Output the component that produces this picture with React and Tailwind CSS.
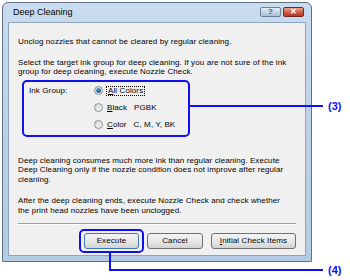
import React from "react";

function Radio({ checked }) {
  return (
    <span className="relative inline-flex h-[9px] w-[9px] shrink-0 items-center justify-center rounded-full border border-[#8e8f8f] bg-gradient-to-br from-[#d8d8d8] to-[#f8f8f8]">
      {checked && <span className="h-[5px] w-[5px] rounded-full bg-gradient-to-br from-[#5fa6d9] to-[#0b4f8a]" />}
    </span>
  );
}

function Btn({ children, def, className }) {
  return (
    <div
      className={
        "flex h-[16px] items-center justify-center rounded-[3px] border bg-gradient-to-b from-[#f4f4f4] via-[#e8e8e8] to-[#d2d2d2] text-[8px] text-black " +
        (def ? "border-[#3d7bad]" : "border-[#707070]") +
        " " +
        className
      }
    >
      {children}
    </div>
  );
}

export default function App() {
  return (
    <div
      className="relative h-[280px] w-[350px] overflow-hidden bg-white text-black"
      style={{ fontFamily: '"Liberation Sans", Arial, sans-serif' }}
    >
      {/* window */}
      <div className="ml-[2px] mt-[2px] flex h-[260px] w-[310px] flex-col rounded-t-[6px] border border-[#5f7187] bg-gradient-to-b from-[#c9dcef] via-[#bcd1e8] to-[#b3cbe4] px-[5px] pb-[5px]">
        {/* title bar */}
        <div className="flex h-[19px] shrink-0 items-center justify-between pl-[5px] pr-[2px]">
          <span className="text-[9px] leading-none text-black">Deep Cleaning</span>
          <div className="flex -mt-[3px] gap-[2px] self-start pt-[7px]">
            <div className="flex h-[10px] w-[21px] items-center justify-center rounded-[2px] border border-[#6b7f96] bg-gradient-to-b from-[#e3edf7] to-[#a9c0da] text-[8px] font-bold leading-none text-[#3b4f66]">
              ?
            </div>
            <div className="flex h-[10px] w-[21px] items-center justify-center rounded-[2px] border border-[#6e2a22] bg-gradient-to-b from-[#e8a493] via-[#d2604a] to-[#b8321e] text-[8px] font-bold leading-none text-white">
              ✕
            </div>
          </div>
        </div>

        {/* client area */}
        <div className="flex flex-1 flex-col border border-[#8ea4bd] bg-[#f0f0f0] px-[9px] text-[8px] leading-[9.5px] tracking-[0.1px]">
          <p className="mt-[14px]">Unclog nozzles that cannot be cleared by regular cleaning.</p>
          <p className="mt-[11px]">
            Select the target ink group for deep cleaning. If you are not sure of the ink
            <br />
            group for deep cleaning, execute Nozzle Check.
          </p>

          {/* ink group */}
          <div className="ml-[4px] mt-[3px] flex h-[57px] w-[168px] rounded-[5px] border-2 border-[#1010f0] pl-[5px] pt-[4px]">
            <div className="w-[65px]">Ink Group:</div>
            <div className="flex flex-col gap-[7.5px]">
              <div className="flex items-center gap-[3px]">
                <Radio checked />
                <span className="border border-dotted border-black px-[1px] leading-[8px]">
                  <u>A</u>ll Colors
                </span>
              </div>
              <div className="flex items-center gap-[4px]">
                <Radio />
                <span>
                  <u>B</u>lack&nbsp;&nbsp;&nbsp;PGBK
                </span>
              </div>
              <div className="flex items-center gap-[4px]">
                <Radio />
                <span>
                  <u>C</u>olor&nbsp;&nbsp;&nbsp;C, M, Y, BK
                </span>
              </div>
            </div>
          </div>

          <p className="mt-[19px]">
            Deep cleaning consumes much more ink than regular cleaning. Execute
            <br />
            Deep Cleaning only if the nozzle condition does not improve after regular
            <br />
            cleaning.
          </p>
          <p className="mt-[12px]">
            After the deep cleaning ends, execute Nozzle Check and check whether
            <br />
            the print head nozzles have been unclogged.
          </p>

          <div className="mt-[8px] h-px bg-[#a0a0a0] shadow-[0_1px_0_#ffffff]" />

          <div className="mt-[9px] flex justify-end gap-[8px]">
            <div className="relative">
              <Btn def className="w-[55px]">Execute</Btn>
              <div className="absolute -inset-x-[5px] -inset-y-[4px] rounded-[5px] border-2 border-[#1010f0]" />
            </div>
            <Btn className="w-[56px]">Cancel</Btn>
            <Btn className="w-[85px]">
              <u>I</u>nitial Check Items
            </Btn>
          </div>
        </div>
      </div>

      {/* annotation (3) */}
      <div className="absolute left-[190px] top-[105px] h-[2px] w-[133px] bg-[#1010f0]" />
      <div className="absolute left-[328px] top-[99px] text-[11px] font-bold leading-[14px] text-[#1010f0]">(3)</div>

      {/* annotation (4) */}
      <div className="absolute left-[109px] top-[252px] h-[19px] w-[2px] bg-[#1010f0]" />
      <div className="absolute left-[109px] top-[269px] h-[2px] w-[214px] bg-[#1010f0]" />
      <div className="absolute left-[328px] top-[263px] text-[11px] font-bold leading-[14px] text-[#1010f0]">(4)</div>
    </div>
  );
}
